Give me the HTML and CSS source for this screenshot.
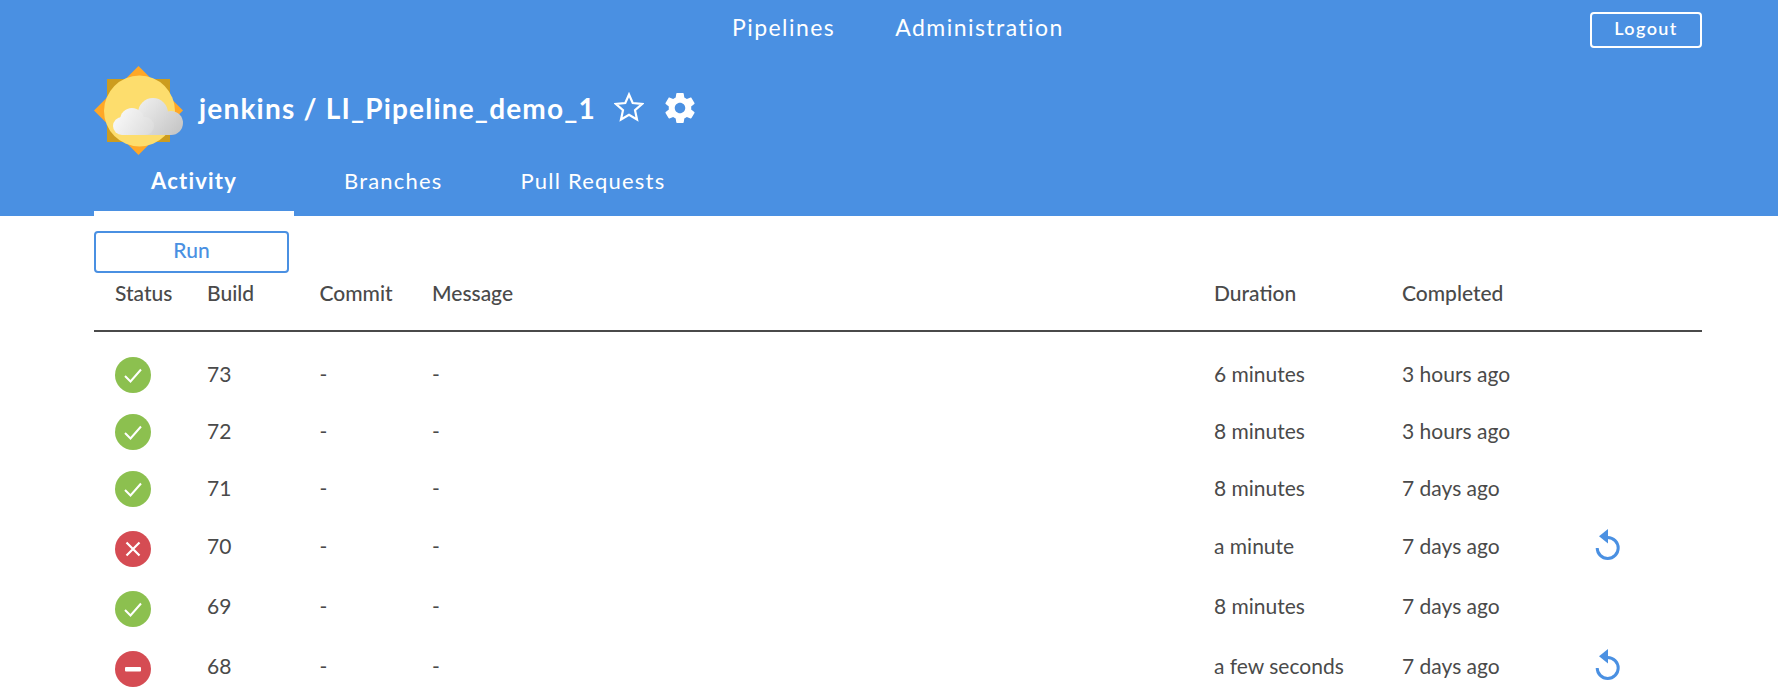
FILE: index.html
```html
<!DOCTYPE html>
<html lang="en">
<head>
<meta charset="utf-8">
<title>LI_Pipeline_demo_1 - Activity</title>
<link rel="stylesheet" href="styles.css">
</head>
<body>
<header class="header">
  <div class="topbar">
    <nav class="mainnav"><a>Pipelines</a><a>Administration</a></nav>
    <button class="logout">Logout</button>
  </div>
  <div class="titlebar">
    <svg class="weather" viewBox="0 0 110 110" width="110" height="110">
      <defs>
        <linearGradient id="cb" gradientUnits="userSpaceOnUse" x1="55" y1="45" x2="95" y2="80"><stop offset="0" stop-color="#eeeeee"/><stop offset="1" stop-color="#c4c4c4"/></linearGradient>
        <linearGradient id="cf" gradientUnits="userSpaceOnUse" x1="30" y1="55" x2="68" y2="80"><stop offset="0" stop-color="#fafafa"/><stop offset="1" stop-color="#dadada"/></linearGradient>
      </defs>
      <polygon points="53.5,11 98,55.500 53.500,100 9,55.500" fill="#ffa726"/>
      <rect x="22" y="24" width="63" height="63" fill="#cc9c1f"/>
      <circle cx="54.500" cy="56" r="35.500" fill="#fddd6d"/>
      <g fill="url(#cb)">
        <circle cx="68" cy="58" r="15"/>
        <circle cx="86" cy="68" r="12"/>
        <rect x="53" y="58" width="33" height="22"/>
      </g>
      <g fill="url(#cf)">
        <circle cx="47" cy="65" r="12"/>
        <circle cx="37" cy="71" r="9"/>
        <circle cx="60" cy="71" r="9"/>
        <rect x="37" y="62" width="23" height="18"/>
      </g>
    </svg>
    <h1 class="title">jenkins / LI_Pipeline_demo_1</h1>
    <svg class="star" viewBox="0 0 30 30" width="30" height="30"><polygon points="15,2.500 18.700,11 28,12 21,18.200 23,27.500 15,22.700 7,27.500 9,18.200 2,12 11.300,11" fill="none" stroke="#fff" stroke-width="2.200" stroke-linejoin="miter"/></svg>
    <svg class="gear" viewBox="0 0 24 24" width="36" height="36"><path fill="#fff" d="M19.430 12.980c.04-.32.07-.64.07-.98s-.03-.66-.07-.98l2.110-1.650c.19-.15.240-.42.120-.64l-2-3.460c-.12-.22-.39-.3-.61-.22l-2.490 1c-.52-.4-1.080-.73-1.690-.98l-.38-2.650C14.460 2.180 14.250 2 14 2h-4c-.25 0-.46.180-.49.420l-.38 2.650c-.61.250-1.170.590-1.690.98l-2.490-1c-.23-.09-.49 0-.61.220l-2 3.460c-.13.220-.07.490.12.640l2.110 1.650c-.04.320-.07.650-.07.980s.03.660.07.980l-2.110 1.650c-.19.150-.24.420-.12.640l2 3.460c.12.220.39.300.61.220l2.490-1c.52.400 1.080.730 1.690.980l.38 2.650c.03.240.24.420.49.420h4c.25 0 .46-.18.49-.42l.38-2.650c.61-.25 1.170-.59 1.690-.98l2.490 1c.23.090.49 0 .61-.22l2-3.460c.12-.22.070-.49-.12-.64l-2.110-1.650zM12 15.500c-1.930 0-3.500-1.570-3.500-3.500s1.570-3.500 3.500-3.500 3.500 1.570 3.500 3.500-1.570 3.500-3.500 3.500z"/></svg>
  </div>
  <nav class="tabs">
    <a class="tab tab-active">Activity</a>
    <a class="tab tab-branches">Branches</a>
    <a class="tab tab-prs">Pull Requests</a>
  </nav>
</header>
<main class="content">
  <button class="run">Run</button>
  <div class="row row-head">
    <span>Status</span><span>Build</span><span>Commit</span><span>Message</span><span>Duration</span><span>Completed</span><span></span>
  </div>
  <div class="rows">
    <div class="row">
      <svg class="status" viewBox="0 0 36 36" width="36" height="36"><circle cx="18" cy="18" r="18" fill="#8cc04f"/><path d="M10 19l5.500 5.500L26 12.500" fill="none" stroke="#fff" stroke-width="2"/></svg>
      <span>73</span><span>-</span><span>-</span><span>6 minutes</span><span>3 hours ago</span><span></span>
    </div>
    <div class="row">
      <svg class="status" viewBox="0 0 36 36" width="36" height="36"><circle cx="18" cy="18" r="18" fill="#8cc04f"/><path d="M10 19l5.500 5.500L26 12.500" fill="none" stroke="#fff" stroke-width="2"/></svg>
      <span>72</span><span>-</span><span>-</span><span>8 minutes</span><span>3 hours ago</span><span></span>
    </div>
    <div class="row">
      <svg class="status" viewBox="0 0 36 36" width="36" height="36"><circle cx="18" cy="18" r="18" fill="#8cc04f"/><path d="M10 19l5.500 5.500L26 12.500" fill="none" stroke="#fff" stroke-width="2"/></svg>
      <span>71</span><span>-</span><span>-</span><span>8 minutes</span><span>7 days ago</span><span></span>
    </div>
    <div class="row row-retry row-raised">
      <svg class="status" viewBox="0 0 36 36" width="36" height="36"><circle cx="18" cy="18" r="18" fill="#d54c53"/><path d="M11.500 11.500l13 13M24.500 11.500l-13 13" fill="none" stroke="#fff" stroke-width="2.200"/></svg>
      <span>70</span><span>-</span><span>-</span><span>a minute</span><span>7 days ago</span>
      <svg class="retry" viewBox="0 0 26 40" width="26" height="40"><path d="M13.700 8.500a10.500 10.500 0 1 1-10.500 10.500" fill="none" stroke="#4a90e2" stroke-width="3"/><polygon points="14,0 14,14.500 5,7.200" fill="#4a90e2"/></svg>
    </div>
    <div class="row row-raised">
      <svg class="status" viewBox="0 0 36 36" width="36" height="36"><circle cx="18" cy="18" r="18" fill="#8cc04f"/><path d="M10 19l5.500 5.500L26 12.500" fill="none" stroke="#fff" stroke-width="2"/></svg>
      <span>69</span><span>-</span><span>-</span><span>8 minutes</span><span>7 days ago</span><span></span>
    </div>
    <div class="row row-retry row-raised">
      <svg class="status" viewBox="0 0 36 36" width="36" height="36"><circle cx="18" cy="18" r="18" fill="#d54c53"/><rect x="10" y="16" width="16" height="4.500" rx="1" fill="#fff"/></svg>
      <span>68</span><span>-</span><span>-</span><span>a few seconds</span><span>7 days ago</span>
      <svg class="retry" viewBox="0 0 26 40" width="26" height="40"><path d="M13.700 8.500a10.500 10.500 0 1 1-10.500 10.500" fill="none" stroke="#4a90e2" stroke-width="3"/><polygon points="14,0 14,14.500 5,7.200" fill="#4a90e2"/></svg>
    </div>
  </div>
</main>
</body>
</html>
```
FILE: styles.css
```css
* { box-sizing: border-box; }
html, body { margin: 0; height: 100%; overflow: hidden; }
body { font-family: Lato, "Open Sans", sans-serif; color: #4a4a4a; background: #fff; }

.header { height: 216px; background: #4a90e2; color: #fff; padding: 0 76px 0 94px; }

.topbar { height: 55px; display: flex; align-items: center; justify-content: space-between; }
.mainnav { display: flex; gap: 60px; margin-left: 638px; padding-bottom: 1px; font-size: 23px; letter-spacing: 1.450px; }
.logout { width: 112px; height: 36px; margin-top: 4px; background: transparent; border: 2px solid #fff; border-radius: 4px; color: #fff; font: 600 18px Lato, sans-serif; letter-spacing: 1.400px; padding: 0 0 3px; }

.titlebar { height: 110px; margin-left: -9px; display: flex; align-items: center; }
.weather { flex: none; }
.title { margin: 0 0 5px 4px; font-size: 28px; font-weight: 700; letter-spacing: 1.200px; line-height: 1; }
.star { margin-left: 18px; margin-bottom: 6px; }
.gear { margin-left: 18px; margin-bottom: 5px; }

.tabs { display: flex; height: 51px; }
.tab { display: block; font-size: 22px; letter-spacing: 1.200px; padding-top: 2px; text-align: center; }
.tab-active { width: 200px; border-bottom: 5px solid #fff; font-weight: 700; }
.tab-branches { margin-left: 50px; }
.tab-prs { margin-left: 78px; }

.content { padding: 15px 76px 0 94px; }
.run { display: block; width: 195px; height: 42px; background: #fff; border: 2px solid #4a90e2; border-radius: 4px; color: #4a90e2; font: 500 21px Lato, sans-serif; padding: 0 0 5px; }

.row { display: grid; grid-template-columns: 92px 112.500px 112.500px 782px 188px 192px 1fr; align-items: center; height: 57px; padding-left: 21px; font-size: 21px; color: #4a4a4a; }
.row-retry { height: 63px; }
.row-head { height: 59px; border-bottom: 2px solid #4a4a4a; font-weight: 500; align-items: start; padding-top: 7px; }
.rows { padding-top: 14.500px; }
.rows .row span { margin-bottom: 4px; }
.rows .row-raised span { margin-bottom: 8px; }
.status { display: block; }
.retry { display: block; }
```
